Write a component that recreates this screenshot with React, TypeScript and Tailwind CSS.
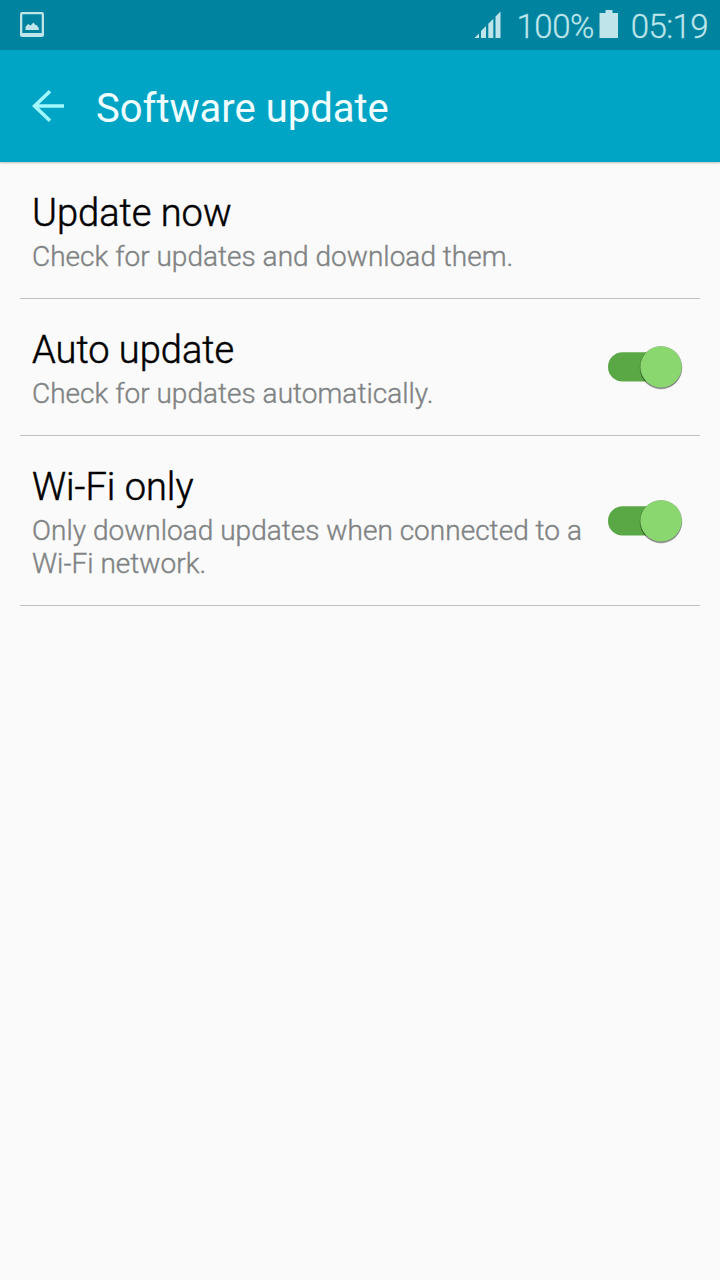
import React from "react";

function Toggle() {
  return (
    <svg width="82" height="52" viewBox="0 0 82 52" className="shrink-0">
      <rect x="4" y="11.3" width="66" height="29.2" rx="14.6" fill="#5aa845" />
      <circle cx="57" cy="27.6" r="20.8" fill="#000" opacity="0.25" />
      <circle cx="57" cy="26.4" r="21.3" fill="#000" opacity="0.3" />
      <circle cx="57" cy="25.9" r="20.7" fill="#8ad66f" />
    </svg>
  );
}

function Row({ title, lines, toggle, size }: { title: string; lines: string[]; toggle?: boolean; size: string }) {
  return (
    <section className={`mx-5 flex items-center justify-between border-b border-[#c0c0c0] pl-3 ${size}`}>
      <div className="pt-[5px]">
        <h2 className="mb-[5px] whitespace-nowrap text-[38px] font-light leading-[43px] text-black [-webkit-text-stroke:0.5px_#000]">{title}</h2>
        {lines.map((l) => (
          <p key={l} className="whitespace-nowrap text-[28px] font-light leading-[33px] tracking-[0.02px] text-[#808384] [-webkit-text-stroke:0.4px_#808384]">{l}</p>
        ))}
      </div>
      {toggle && <div className="pr-[14px]"><Toggle /></div>}
    </section>
  );
}

export default function App() {
  return (
    <main className="h-[1280px] w-[720px] overflow-hidden bg-[#fafafa] font-['Roboto',sans-serif]">
      <div className="flex h-[50px] items-center justify-between bg-[#00839f] pl-5 pr-3 text-[#bfe5ea]">
        <svg width="24" height="26" viewBox="0 0 24 26">
          <path fillRule="evenodd" d="M2 0h20a2 2 0 0 1 2 2v21a2 2 0 0 1-2 2H2a2 2 0 0 1-2-2V2a2 2 0 0 1 2-2zM2.3 2.3v18.7h19.4V2.3z" fill="currentColor" />
          <path d="M5.5 18v-3l2.5-3 2.5 1.5L13.5 10.5l2 2.5h1l2.3 3v2z" fill="currentColor" />
        </svg>
        <div className="flex items-center text-[33px] font-light [-webkit-text-stroke:0.3px_#bfe5ea]">
          <svg width="28" height="28" viewBox="0 0 28 28" fill="currentColor"><path d="M0.5 27L5 22.5V27zM7 27v-7l5-5v12zM14.3 27V12.8l5-5V27zM21.5 27V5.5l5-5v26.5z" /></svg>
          <span className="ml-[15px] pt-[2px] leading-[37px] tracking-[-0.5px]">100%</span>
          <svg width="20" height="30" viewBox="0 0 20 30" className="ml-[5px]" fill="currentColor"><path d="M6.5 0h7v3h5.5v25H0.5V3h6z" /></svg>
          <span className="ml-[12px] pt-[2px] leading-[37px] tracking-[-0.6px]">05:19</span>
        </div>
      </div>
      <header className="flex h-28 items-center bg-[#00a5c6] pl-8 shadow-[0_1px_2px_rgba(0,0,0,0.25)]">
        <svg width="34" height="34" viewBox="0 0 34 34" fill="none" stroke="#a2f8fc" strokeWidth="3.6"><path d="M32 17H3M18 2.3L2.5 17 18 31.7" /></svg>
        <h1 className="ml-[30px] pt-[5px] text-[40px] text-[#effdff]">Software update</h1>
      </header>
      <Row title="Update now" lines={["Check for updates and download them."]} size="h-[137px]" />
      <Row title="Auto update" lines={["Check for updates automatically."]} toggle size="h-[137px]" />
      <Row title="Wi-Fi only" lines={["Only download updates when connected to a", "Wi-Fi network."]} toggle size="h-[170px]" />
    </main>
  );
}
